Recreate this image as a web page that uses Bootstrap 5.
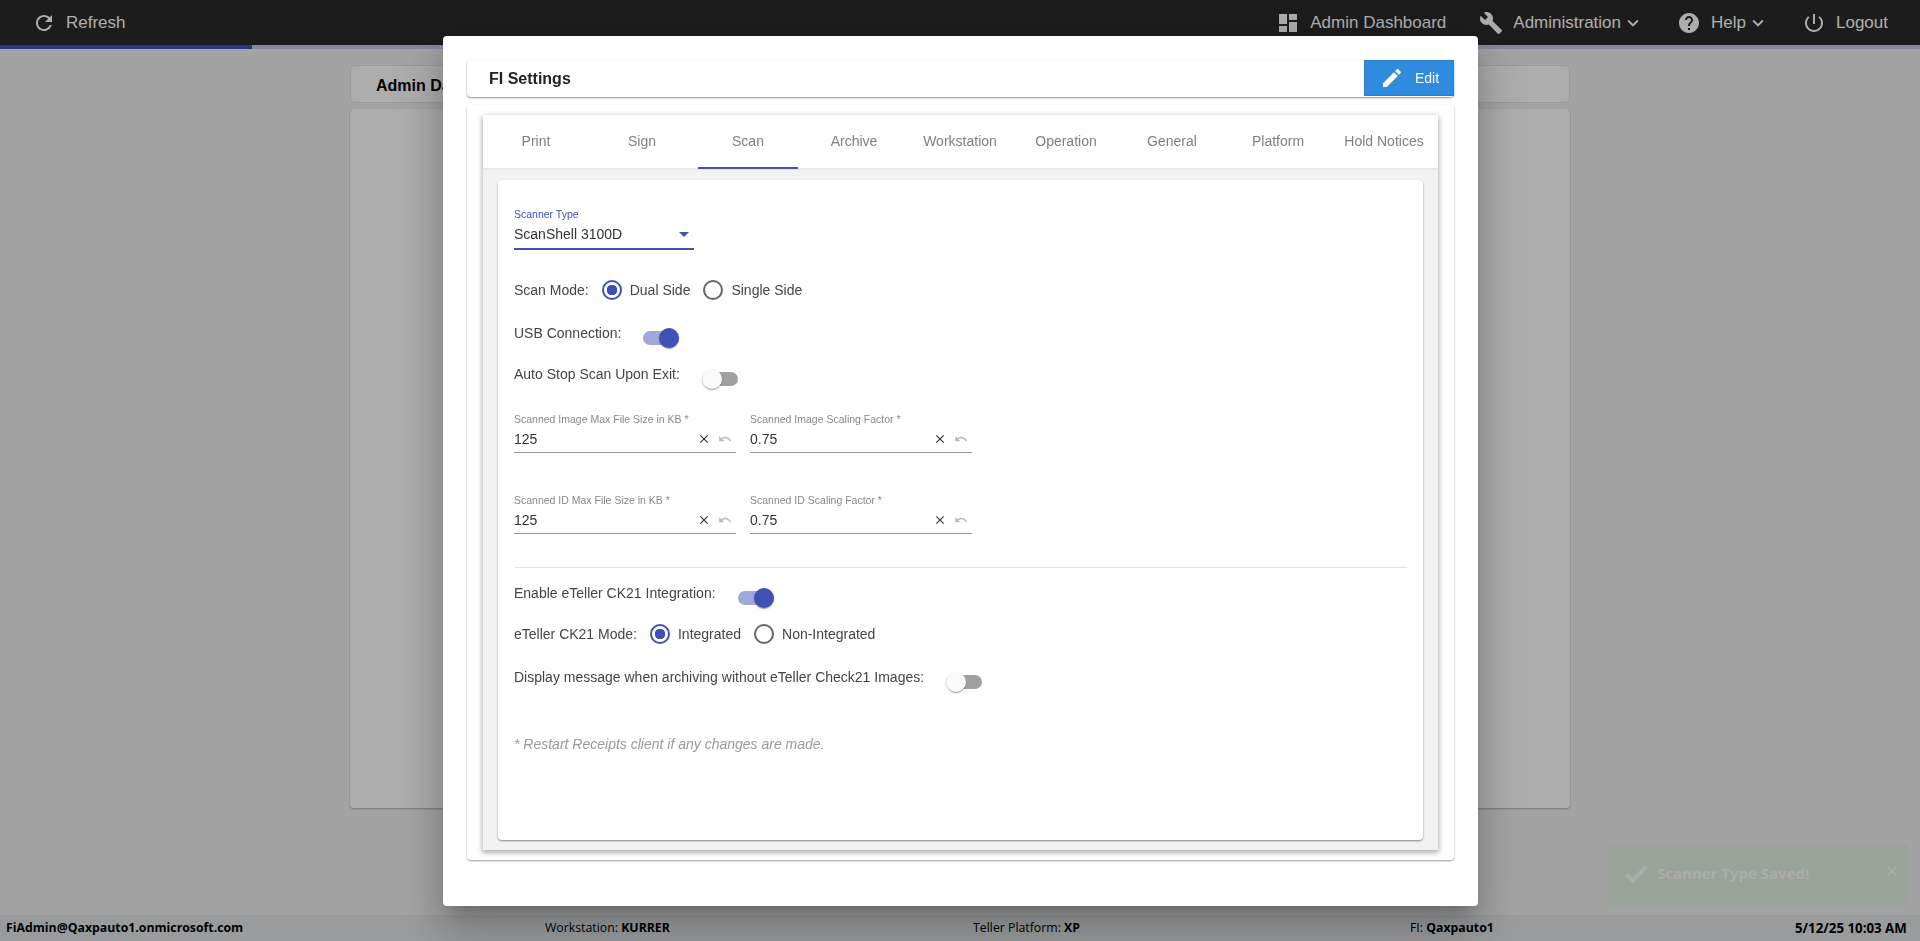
<!DOCTYPE html>
<html lang="en"><head><meta charset="utf-8"><title>FI Settings</title>
<link href="https://cdn.jsdelivr.net/npm/bootstrap@5.3.0/dist/css/bootstrap.min.css" rel="stylesheet">
<style>
html,body{height:100%;overflow:hidden}
body{background:#f0f0f0;font-family:"Liberation Sans",Arial,sans-serif;font-size:14px;color:#444}
svg{fill:currentColor;flex:none;display:block}
.page-shell{height:941px}
.top-strip{height:45px;background:#2a2a2a;color:#fff;font-size:17px;padding:0 32px}
.top-item{display:flex;align-items:center;gap:10px;line-height:45px}
.top-next{margin-left:33px}
.chev-ico{margin-left:-9px}
.prog-wrap{height:4px;background:#c5cae9}
.prog-fill{width:252px;height:4px;background:#3f51b5}
.under-area{flex:1;padding:16px 350px 0;min-height:0}
.under-head{height:38px;background:#fff;border:1px solid #e4e4e4;border-radius:4px;padding:0 25px;font:700 16px/40px "Liberation Sans",sans-serif;color:#000}
.under-body{height:699px;background:#fff;border-radius:4px;margin-top:6px;box-shadow:0 1px 2px rgba(0,0,0,.25)}
.foot-strip{height:26px;background:#e2e5e7;font:12.3px/26px "Open Sans",sans-serif;color:#000;white-space:nowrap}
.foot-strip b{font-weight:700}
.foot-date{font-size:13.3px}
.scrim{position:fixed;inset:0;background:rgba(0,0,0,.32)}
.toast-box{position:fixed;left:1608px;top:845px;width:300px;height:60px;background:#e4f0e4;color:#fff;font:700 15px/20px "Open Sans",sans-serif;padding:18px 8px 0 14px}
.dialog-box{position:fixed;left:443px;top:36px;width:1035px;height:870px;background:#fff;border-radius:4px;padding:24px 24px 0;box-shadow:0 11px 15px -7px rgba(0,0,0,.2),0 24px 38px 3px rgba(0,0,0,.14),0 9px 46px 8px rgba(0,0,0,.12)}
.title-card{height:37px;border:0;border-radius:4px;box-shadow:0 1px 2px rgba(0,0,0,.45);padding-left:22px;font:700 16px/37px "Liberation Sans",sans-serif;color:#222}
.edit-btn{width:90px;height:36px;background:#2e8bdd;border:1px solid #2a7fca;border-radius:0;color:#fff;font:14px/1 "Liberation Sans",sans-serif;padding:0 0 0 15px;gap:11px}
.settings-card{height:755px;margin-top:8px;border:0;border-radius:4px;padding:10px 16px;box-shadow:0 1px 2px rgba(0,0,0,.4)}
.tab-card{height:735px;border:0;border-radius:0;box-shadow:0 2px 5px 1px rgba(0,0,0,.3);background:#f2f2f2}
.tab-row{height:55px;background:#fff;border-bottom:2px solid #e6e6e6}
.tab-cell{width:106px;text-align:center;color:#808080;line-height:52px;position:relative;white-space:nowrap}
.tab-on::after{content:"";position:absolute;left:3px;right:3px;bottom:-1px;height:2px;background:#3f51b5}
.form-sheet{height:660px;margin:10px 15px 0;border:0;border-radius:4px;padding:27px 16px 0;background:#fff;box-shadow:0 1px 2px rgba(0,0,0,.45)}
.pick-box{width:180px;border-bottom:2px solid #3f51b5;padding-bottom:4px}
.mini-label{font-size:10.5px;line-height:14px;color:#888;white-space:nowrap}
.mini-label.on{color:#3f51b5}
.val-line{margin-top:3px;line-height:20px;color:#333}
.caret-down{width:0;height:0;border-left:5px solid transparent;border-right:5px solid transparent;border-top:5px solid #3f51b5;margin-right:5px}
.radio-row{height:24px;margin-top:28px;line-height:24px}
.radio-dot{width:20px;height:20px;border:2px solid #666;border-radius:50%;margin:0 8px 0 13px;flex:none}
.radio-dot.on{border-color:#3f51b5;background:radial-gradient(circle,#3f51b5 0 5px,#fff 5.5px)}
.switch-row{height:26px;line-height:20px;gap:22px}
.sw-track{width:36px;height:14px;border-radius:7px;background:#a0a0a0;margin-top:8px;position:relative;flex:none}
.sw-track::after{content:"";position:absolute;left:0;top:-3px;width:20px;height:20px;border-radius:50%;background:#fafafa;box-shadow:0 2px 1px -1px rgba(0,0,0,.2),0 1px 1px rgba(0,0,0,.14),0 1px 3px rgba(0,0,0,.12)}
.sw-track.on{background:#9fa8da}
.sw-track.on::after{left:16px;background:#3f51b5}
.field-pair{gap:14px}
.num-field{width:222px;border-bottom:1px solid #999;padding-bottom:3px}
.x-ico{color:#333;margin-left:auto}
.undo-ico{color:#bbb;margin:0 4px 0 7px}
.sep-line{height:1px;background:#e4e4e4;margin-top:33px}
.note-line{margin-top:41px;line-height:20px;font-style:italic;color:#999}
.gap-15{margin-top:15px}.gap-21{margin-top:21px}.gap-22{margin-top:22px}.gap-40{margin-top:40px}.gap-13{margin-top:13px}
</style></head>
<body>
<div class="page-shell d-flex flex-column">
  <div class="top-strip d-flex align-items-center justify-content-between">
    <div class="top-item"><svg width="24" height="24" viewBox="0 0 24 24"><path d="M17.65 6.35C16.2 4.9 14.21 4 12 4c-4.42 0-7.99 3.58-7.99 8s3.57 8 7.99 8c3.73 0 6.84-2.55 7.73-6h-2.08c-.82 2.33-3.04 4-5.65 4-3.31 0-6-2.69-6-6s2.69-6 6-6c1.66 0 3.14.69 4.22 1.78L13 11h7V4l-2.35 2.35z"/></svg>Refresh</div>
    <div class="d-flex align-items-center">
      <div class="top-item"><svg width="24" height="24" viewBox="0 0 24 24"><path d="M3 13h8V3H3v10zm0 8h8v-6H3v6zm10 0h8V11h-8v10zm0-18v6h8V3h-8z"/></svg>Admin Dashboard</div>
      <div class="top-item top-next"><svg width="24" height="24" viewBox="0 0 24 24"><path d="M22.7 19l-9.1-9.1c.9-2.3.4-5-1.5-6.9-2-2-5-2.4-7.4-1.3L9 6 6 9 1.6 4.7C.4 7.1.9 10.1 2.9 12.1c1.9 1.9 4.6 2.4 6.9 1.5l9.1 9.1c.4.4 1 .4 1.4 0l2.3-2.3c.5-.4.5-1.1.1-1.4z"/></svg><span>Administration</span><svg class="chev-ico" width="22" height="22" viewBox="0 0 24 24"><path d="M16.59 8.59L12 13.17 7.41 8.59 6 10l6 6 6-6z"/></svg></div>
      <div class="top-item top-next"><svg width="24" height="24" viewBox="0 0 24 24"><path d="M12 2C6.48 2 2 6.48 2 12s4.48 10 10 10 10-4.48 10-10S17.52 2 12 2zm1 17h-2v-2h2v2zm2.07-7.75l-.9.92C13.45 12.9 13 13.5 13 15h-2v-.5c0-1.1.45-2.1 1.17-2.83l1.24-1.26c.37-.36.59-.86.59-1.41 0-1.1-.9-2-2-2s-2 .9-2 2H8c0-2.21 1.79-4 4-4s4 1.79 4 4c0 .88-.36 1.68-.93 2.25z"/></svg><span>Help</span><svg class="chev-ico" width="22" height="22" viewBox="0 0 24 24"><path d="M16.59 8.59L12 13.17 7.41 8.59 6 10l6 6 6-6z"/></svg></div>
      <div class="top-item top-next"><svg width="24" height="24" viewBox="0 0 24 24"><path d="M13 3h-2v10h2V3zm4.83 2.17l-1.42 1.42C17.99 7.86 19 9.81 19 12c0 3.87-3.13 7-7 7s-7-3.13-7-7c0-2.19 1.01-4.14 2.58-5.42L6.17 5.17C4.23 6.82 3 9.26 3 12c0 4.97 4.03 9 9 9s9-4.03 9-9c0-2.74-1.23-5.18-3.17-6.83z"/></svg>Logout</div>
    </div>
  </div>
  <div class="prog-wrap"><div class="prog-fill"></div></div>
  <div class="under-area">
    <div class="under-head">Admin Dashboard</div>
    <div class="under-body"></div>
  </div>
  <div class="foot-strip d-flex">
    <b style="width:545px;padding-left:6px">FiAdmin@Qaxpauto1.onmicrosoft.com</b>
    <span style="width:428px">Workstation: <b>KURRER</b></span>
    <span style="width:437px">Teller Platform: <b>XP</b></span>
    <span style="width:385px">FI: <b>Qaxpauto1</b></span>
    <b class="foot-date">5/12/25 10:03 AM</b>
  </div>
</div>
<div class="toast-box d-flex align-items-start" style="z-index:1">
  <svg width="28" height="28" viewBox="0 0 24 24" style="margin:-3px 7px 0 0"><path d="M9 16.17L4.83 12l-1.42 1.41L9 19 21 7l-1.41-1.41z" stroke="#fff" stroke-width="1.5"/></svg>
  <span>Scanner Type Saved!</span>
  <svg class="ms-auto" width="16" height="16" viewBox="0 0 24 24"><path d="M19 6.41L17.59 5 12 10.59 6.41 5 5 6.41 10.59 12 5 17.59 6.41 19 12 13.41 17.59 19 19 17.59 13.41 12z" stroke="#fff"/></svg>
</div>
<div class="scrim" style="z-index:2"></div>
<div class="dialog-box" style="z-index:3">
  <div class="card title-card flex-row justify-content-between">
    <span>FI Settings</span>
    <button class="btn edit-btn d-flex align-items-center" type="button"><svg width="24" height="24" viewBox="0 0 24 24"><path d="M3 17.25V21h3.75L17.81 9.94l-3.75-3.75L3 17.25zM20.71 7.04c.39-.39.39-1.02 0-1.41l-2.34-2.34c-.39-.39-1.02-.39-1.41 0l-1.83 1.83 3.75 3.75 1.83-1.83z"/></svg>Edit</button>
  </div>
  <div class="card settings-card">
    <div class="card tab-card">
      <div class="d-flex tab-row">
        <div class="tab-cell">Print</div><div class="tab-cell">Sign</div><div class="tab-cell tab-on">Scan</div><div class="tab-cell">Archive</div><div class="tab-cell">Workstation</div><div class="tab-cell">Operation</div><div class="tab-cell">General</div><div class="tab-cell">Platform</div><div class="tab-cell">Hold Notices</div>
      </div>
      <div class="card form-sheet">
        <div class="pick-box">
          <div class="mini-label on">Scanner Type</div>
          <div class="val-line d-flex align-items-center justify-content-between"><span>ScanShell 3100D</span><span class="caret-down"></span></div>
        </div>
        <div class="radio-row d-flex align-items-center"><span>Scan Mode:</span><span class="radio-dot on"></span><span>Dual Side</span><span class="radio-dot"></span><span>Single Side</span></div>
        <div class="switch-row d-flex gap-21"><span>USB Connection:</span><span class="sw-track on"></span></div>
        <div class="switch-row d-flex gap-15"><span>Auto Stop Scan Upon Exit:</span><span class="sw-track"></span></div>
        <div class="d-flex field-pair gap-22">
          <div class="num-field"><div class="mini-label">Scanned Image Max File Size in KB *</div><div class="val-line d-flex align-items-center"><span>125</span><svg class="x-ico" width="14" height="14" viewBox="0 0 24 24"><path d="M19 6.41L17.59 5 12 10.59 6.41 5 5 6.41 10.59 12 5 17.59 6.41 19 12 13.41 17.59 19 19 17.59 13.41 12z"/></svg><svg class="undo-ico" width="14" height="14" viewBox="0 0 24 24"><path d="M12.5 8c-2.65 0-5.05.99-6.9 2.6L2 7v9h9l-3.62-3.62c1.39-1.16 3.16-1.88 5.12-1.88 3.54 0 6.55 2.31 7.6 5.5l2.37-.78C21.08 11.03 17.15 8 12.5 8z"/></svg></div></div>
          <div class="num-field"><div class="mini-label">Scanned Image Scaling Factor *</div><div class="val-line d-flex align-items-center"><span>0.75</span><svg class="x-ico" width="14" height="14" viewBox="0 0 24 24"><path d="M19 6.41L17.59 5 12 10.59 6.41 5 5 6.41 10.59 12 5 17.59 6.41 19 12 13.41 17.59 19 19 17.59 13.41 12z"/></svg><svg class="undo-ico" width="14" height="14" viewBox="0 0 24 24"><path d="M12.5 8c-2.65 0-5.05.99-6.9 2.6L2 7v9h9l-3.62-3.62c1.39-1.16 3.16-1.88 5.12-1.88 3.54 0 6.55 2.31 7.6 5.5l2.37-.78C21.08 11.03 17.15 8 12.5 8z"/></svg></div></div>
        </div>
        <div class="d-flex field-pair gap-40">
          <div class="num-field"><div class="mini-label">Scanned ID Max File Size in KB *</div><div class="val-line d-flex align-items-center"><span>125</span><svg class="x-ico" width="14" height="14" viewBox="0 0 24 24"><path d="M19 6.41L17.59 5 12 10.59 6.41 5 5 6.41 10.59 12 5 17.59 6.41 19 12 13.41 17.59 19 19 17.59 13.41 12z"/></svg><svg class="undo-ico" width="14" height="14" viewBox="0 0 24 24"><path d="M12.5 8c-2.65 0-5.05.99-6.9 2.6L2 7v9h9l-3.62-3.62c1.39-1.16 3.16-1.88 5.12-1.88 3.54 0 6.55 2.31 7.6 5.5l2.37-.78C21.08 11.03 17.15 8 12.5 8z"/></svg></div></div>
          <div class="num-field"><div class="mini-label">Scanned ID Scaling Factor *</div><div class="val-line d-flex align-items-center"><span>0.75</span><svg class="x-ico" width="14" height="14" viewBox="0 0 24 24"><path d="M19 6.41L17.59 5 12 10.59 6.41 5 5 6.41 10.59 12 5 17.59 6.41 19 12 13.41 17.59 19 19 17.59 13.41 12z"/></svg><svg class="undo-ico" width="14" height="14" viewBox="0 0 24 24"><path d="M12.5 8c-2.65 0-5.05.99-6.9 2.6L2 7v9h9l-3.62-3.62c1.39-1.16 3.16-1.88 5.12-1.88 3.54 0 6.55 2.31 7.6 5.5l2.37-.78C21.08 11.03 17.15 8 12.5 8z"/></svg></div></div>
        </div>
        <div class="sep-line"></div>
        <div class="switch-row d-flex gap-15"><span>Enable eTeller CK21 Integration:</span><span class="sw-track on"></span></div>
        <div class="radio-row d-flex align-items-center gap-13"><span>eTeller CK21 Mode:</span><span class="radio-dot on"></span><span>Integrated</span><span class="radio-dot"></span><span>Non-Integrated</span></div>
        <div class="switch-row d-flex gap-21"><span>Display message when archiving without eTeller Check21 Images:</span><span class="sw-track"></span></div>
        <div class="note-line">* Restart Receipts client if any changes are made.</div>
      </div>
    </div>
  </div>
</div>
<script src="https://cdn.jsdelivr.net/npm/bootstrap@5.3.0/dist/js/bootstrap.bundle.min.js"></script>
</body></html>
